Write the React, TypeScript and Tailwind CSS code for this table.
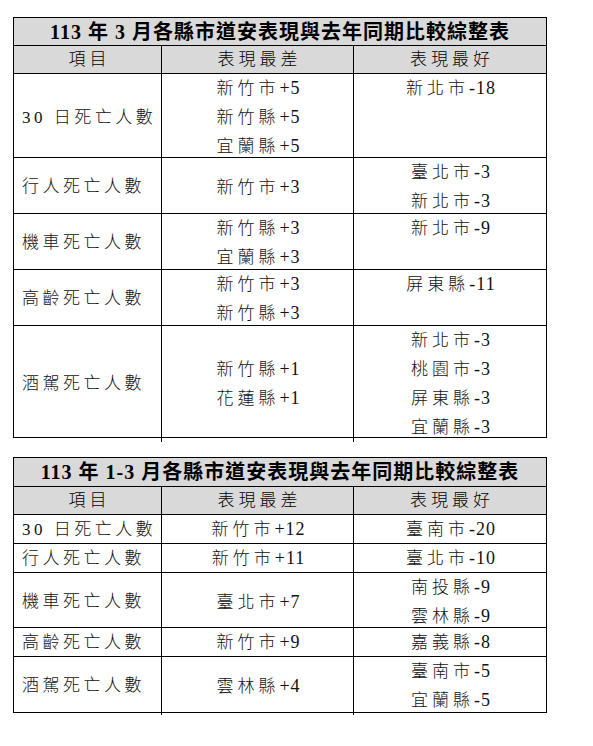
import React from "react";

type Row = { label: string; worst: string[]; best: string[]; h: string };

const FONT = "font-['Liberation_Serif','Noto_Sans_CJK_TC',serif]";

const t1: Row[] = [
  { label: "30 日死亡人數", worst: ["新竹市+5", "新竹縣+5", "宜蘭縣+5"], best: ["新北市-18"], h: "h-[84px]" },
  { label: "行人死亡人數", worst: ["新竹市+3"], best: ["臺北市-3", "新北市-3"], h: "h-[56px]" },
  { label: "機車死亡人數", worst: ["新竹縣+3", "宜蘭縣+3"], best: ["新北市-9"], h: "h-[56px]" },
  { label: "高齡死亡人數", worst: ["新竹市+3", "新竹縣+3"], best: ["屏東縣-11"], h: "h-[56px]" },
  { label: "酒駕死亡人數", worst: ["新竹縣+1", "花蓮縣+1"], best: ["新北市-3", "桃園市-3", "屏東縣-3", "宜蘭縣-3"], h: "h-[112px]" },
];

const t2: Row[] = [
  { label: "30 日死亡人數", worst: ["新竹市+12"], best: ["臺南市-20"], h: "h-[29px]" },
  { label: "行人死亡人數", worst: ["新竹市+11"], best: ["臺北市-10"], h: "h-[29px]" },
  { label: "機車死亡人數", worst: ["臺北市+7"], best: ["南投縣-9", "雲林縣-9"], h: "h-[55px]" },
  { label: "高齡死亡人數", worst: ["新竹市+9"], best: ["嘉義縣-8"], h: "h-[29px]" },
  { label: "酒駕死亡人數", worst: ["雲林縣+4"], best: ["臺南市-5", "宜蘭縣-5"], h: "h-[56px]" },
];

function Val({ s }: { s: string }) {
  const m = s.match(/^(.*?)([+-].*)$/);
  const name = m ? m[1] : s;
  const num = m ? m[2] : "";
  return (
    <div className="whitespace-nowrap leading-[28px]">
      <span className="tracking-[4px]">{name}</span>
      <span className="text-[18px] tracking-[1px]">{num}</span>
    </div>
  );
}

function Table({ title, rows, titleH }: { title: string; rows: Row[]; titleH: string }) {
  return (
    <div className={`ml-[13px] w-[534px] border border-black ${FONT} text-black`}>
      <div className={`${titleH} flex items-center justify-center bg-[#d9d9d9] text-[20px] font-bold tracking-[1px] leading-[28px]`}>
        {title}
      </div>
      <div className="grid h-[28px] grid-cols-[147px_192px_193px] border-t border-black bg-[#d9d9d9] text-[17px] font-light leading-[27px] tracking-[4px]">
        <div className="flex items-center justify-center pl-[4px]">項目</div>
        <div className="flex items-center justify-center border-l border-black pl-[4px]">表現最差</div>
        <div className="flex items-center justify-center border-l border-black pl-[4px]">表現最好</div>
      </div>
      {rows.map((r, i) => (
        <div
          key={i}
          className={`grid ${r.h} grid-cols-[147px_192px_193px] border-t border-black text-[17px] font-light leading-[28px] text-[#111]`}
        >
          <div className="flex items-center pl-[8px] whitespace-nowrap tracking-[3.5px]">{r.label}</div>
          <div className="flex flex-col items-center justify-center border-l border-black pl-[2px]">
            {r.worst.map((w, j) => (
              <Val key={j} s={w} />
            ))}
          </div>
          <div className="flex flex-col items-center justify-start border-l border-black pl-[2px]">
            {r.best.map((b, j) => (
              <Val key={j} s={b} />
            ))}
          </div>
        </div>
      ))}
    </div>
  );
}

export default function App() {
  return (
    <div className="min-h-[746px] w-[593px] bg-white">
      <div className={`h-[17px] overflow-hidden pl-[16px] ${FONT} text-[17px] text-black`}>
        <div className="-mt-[19px] leading-[24px] tracking-[4px]">附表：</div>
      </div>
      <Table title="113 年 3 月各縣市道安表現與去年同期比較綜整表" rows={t1} titleH="h-[27px]" />
      <div className="h-[19px]" />
      <Table title="113 年 1-3 月各縣市道安表現與去年同期比較綜整表" rows={t2} titleH="h-[28px]" />
    </div>
  );
}
